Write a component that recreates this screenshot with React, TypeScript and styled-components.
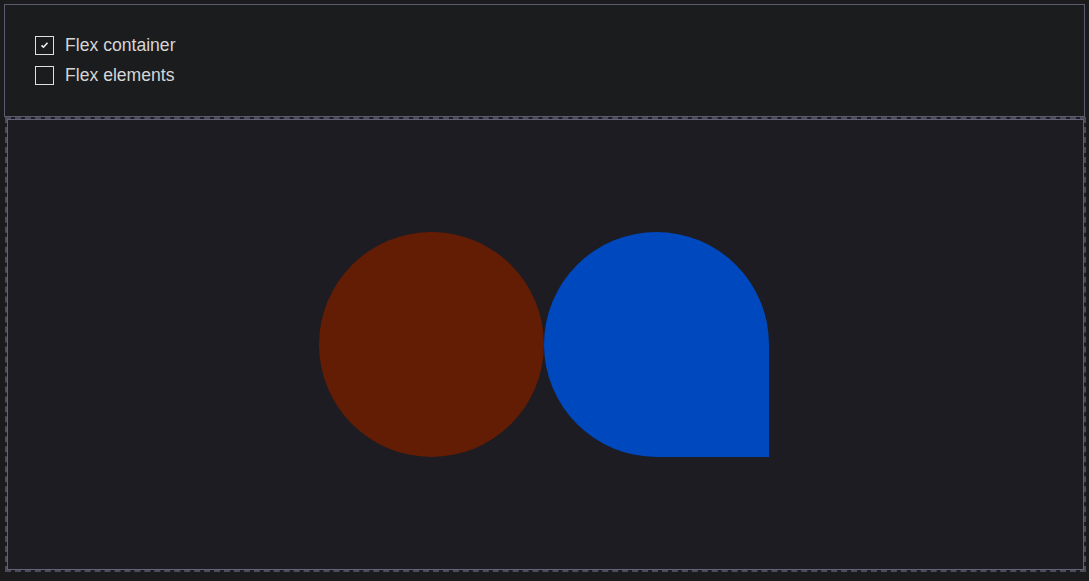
import React, { useState } from "react";
import styled, { createGlobalStyle } from "styled-components";

const Global = createGlobalStyle`
  html, body { margin: 0; padding: 0; background: #1b1b1d; }
  body { padding: 4px 0 0 4px; font-family: "Liberation Sans", Arial, sans-serif; }
`;

const Panel = styled.div`
  border: 1px solid #5b5b70;
  background: #1b1c1e;
  padding: 25px 0 0 30px;
  box-sizing: border-box;
  height: 113px;
  width: 1081px;
`;

const Row = styled.label`
  display: flex;
  align-items: center;
  height: 30px;
  gap: 11px;
  color: #d6d6d6;
  font-size: 17.6px;
  cursor: pointer;
`;

const Box = styled.span`
  width: 19px;
  height: 19px;
  box-sizing: border-box;
  border: 1px solid #e0e0e0;
  display: flex;
  align-items: center;
  justify-content: center;
`;

const Stage = styled.div`
  margin-left: 1px;
  width: 1081px;
  height: 455px;
  box-sizing: border-box;
  padding-right: 3px;
  border: 2px dashed #4c4c58;
  box-shadow: inset 0 0 0 1px #62627a;
  background: #1c1c22;
  display: flex;
  align-items: center;
  justify-content: center;
`;

const Shape = styled.div<{ $color: string; $radius: string }>`
  width: 225px;
  height: 225px;
  background: ${(p) => p.$color};
  border-radius: ${(p) => p.$radius};
`;

function Check({ checked, label, onToggle }: { checked: boolean; label: string; onToggle: () => void }) {
  return (
    <Row onClick={onToggle}>
      <Box>
        {checked && (
          <svg width="9" height="8" viewBox="0 0 9 8">
            <path d="M1.5 4.3 L3.5 6.2 L7.5 1.8" stroke="#f0f0f0" strokeWidth="1.6" fill="none" />
          </svg>
        )}
      </Box>
      {label}
    </Row>
  );
}

export default function App() {
  const [a, setA] = useState(true);
  const [b, setB] = useState(false);
  return (
    <>
      <Global />
      <Panel>
        <Check checked={a} label="Flex container" onToggle={() => setA(!a)} />
        <Check checked={b} label="Flex elements" onToggle={() => setB(!b)} />
      </Panel>
      <Stage>
        <Shape $color="#621d04" $radius="50%" />
        <Shape $color="#0048bd" $radius="50% 50% 0 50%" />
      </Stage>
    </>
  );
}
